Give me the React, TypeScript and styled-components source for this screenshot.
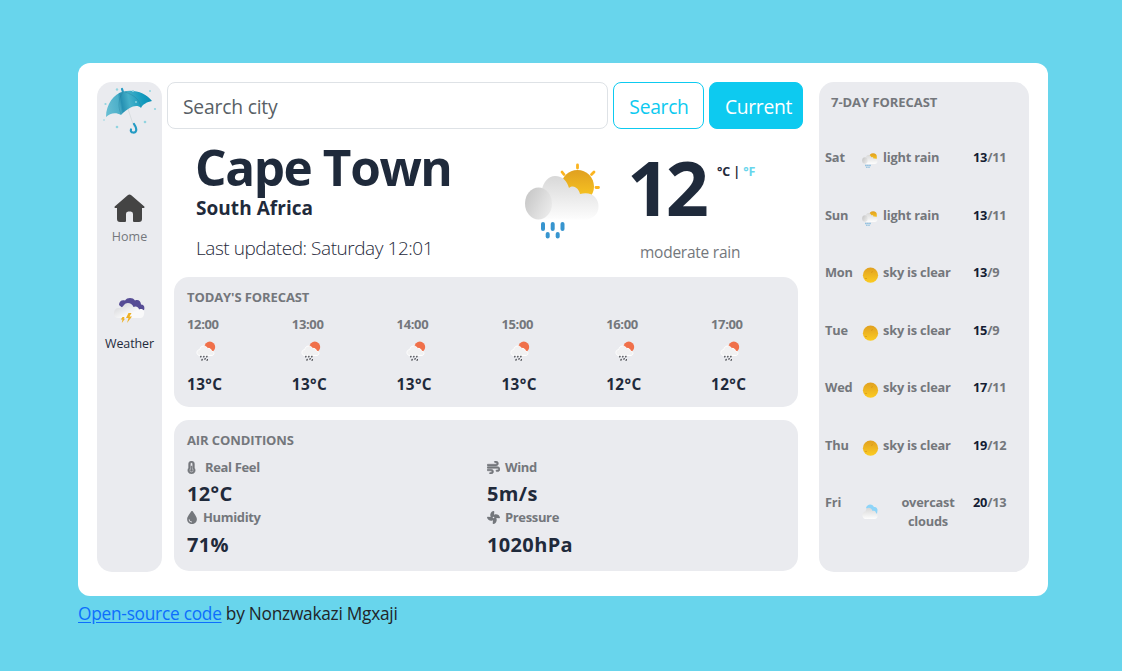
import React from "react";
import styled, { createGlobalStyle } from "styled-components";
import { FaWind, FaDroplet, FaFan, FaTemperatureHalf } from "react-icons/fa6";

const navy = "#1f2a3b";
const grey = "#74777c";
const panel = "#eaebef";
const sky = "#68d5ec";
const info = "#0dcaf0";

const GlobalStyle = createGlobalStyle`
  * { box-sizing: border-box; }
  body {
    margin: 0;
    background: ${sky};
    font-family: "Open Sans", "Noto Sans", sans-serif;
    color: ${navy};
  }
  svg { display: block; }
`;

const Page = styled.div`
  padding: 63px 74px 0 78px;
  height: 671px;
  overflow: hidden;
`;

const Card = styled.main`
  display: flex;
  height: 533px;
  padding: 19px;
  background: #fff;
  border-radius: 12px;
`;

const Sidebar = styled.nav`
  width: 65px;
  height: 490px;
  padding-top: 5px;
  background: ${panel};
  border-radius: 15px;
  display: flex;
  flex-direction: column;
  align-items: center;
`;

const NavItem = styled.div<{ $gap: number; $active?: boolean; $spacing: number }>`
  margin-top: ${(p) => p.$gap}px;
  display: flex;
  flex-direction: column;
  align-items: center;
  font-size: 12.5px;
  line-height: 18px;
  white-space: nowrap;
  letter-spacing: ${(p) => p.$spacing}px;
  color: ${(p) => (p.$active ? navy : grey)};
`;

const NavIcon = styled.div<{ $h: number }>`
  height: ${(p) => p.$h}px;
`;

const Main = styled.section`
  width: 636px;
  margin-left: 5px;
`;

const SearchBar = styled.form`
  display: flex;
  gap: 5px;
  height: 47px;
`;

const SearchInput = styled.input`
  width: 441px;
  padding: 2px 15px 0 15px;
  border: 1px solid #dee2e6;
  border-radius: 8px;
  font: 19.3px "Open Sans", sans-serif;
  letter-spacing: -0.2px;
  color: ${navy};
  &::placeholder { color: #595f66; opacity: 1; }
`;

const Button = styled.button<{ $solid?: boolean }>`
  width: ${(p) => (p.$solid ? 94 : 91)}px;
  padding: ${(p) => (p.$solid ? "2px 0 0 5px" : "2px 0 0 1px")};
  border: 1px solid ${info};
  border-radius: 8px;
  background: ${(p) => (p.$solid ? info : "#fff")};
  color: ${(p) => (p.$solid ? "#fff" : info)};
  font: 19.3px "Open Sans", sans-serif;
  letter-spacing: -0.3px;
`;

const Overview = styled.header`
  display: flex;
  height: 148px;
  padding-left: 29px;
`;

const Place = styled.div`
  width: 328px;
  padding-top: 13px;
  white-space: nowrap;
`;

const City = styled.h1`
  margin: 0 0 0 -1px;
  font-size: 49.5px;
  line-height: 50px;
  letter-spacing: -1.4px;
`;

const Country = styled.h2`
  margin: 4px 0 0;
  font-size: 19px;
  line-height: 25px;
  letter-spacing: 0.05px;
`;

const Updated = styled.p`
  margin: 15px 0 0;
  font-size: 19px;
  font-weight: 300;
  line-height: 25px;
  letter-spacing: -0.45px;
`;

const HeroIcon = styled.div`
  width: 77px;
  padding-top: 33px;
`;

const Current = styled.div`
  margin-left: 26px;
  padding-top: 20px;
  white-space: nowrap;
`;

const Temperature = styled.div`
  display: flex;
  height: 76px;
  font-weight: 700;
`;

const Degrees = styled.span`
  width: 90px;
  font-size: 75.5px;
  line-height: 76px;
  letter-spacing: -4.5px;
`;

const Units = styled.span`
  padding-top: 13px;
  font-size: 12.5px;
  line-height: 20px;
  letter-spacing: -0.1px;
`;

const Fahrenheit = styled.span`
  color: ${sky};
`;

const Condition = styled.p`
  margin: 15px 0 0 13px;
  font-size: 15.5px;
  line-height: 25px;
  letter-spacing: -0.25px;
  color: ${grey};
`;

const Panel = styled.section<{ $h: number }>`
  width: 624px;
  height: ${(p) => p.$h}px;
  margin: 0 0 13px 7px;
  padding: 10px 0 0 13px;
  background: ${panel};
  border-radius: 15px;
  white-space: nowrap;
`;

const Title = styled.h3`
  margin: 0;
  font-size: 13px;
  line-height: 20px;
  letter-spacing: -0.1px;
  color: ${grey};
`;

const Hours = styled.div`
  display: grid;
  grid-template-columns: repeat(6, 104.8px);
  margin-top: 7px;
`;

const Hour = styled.div`
  font-size: 13px;
  font-weight: 700;
  line-height: 20px;
  letter-spacing: -0.35px;
  color: ${grey};
`;

const HourIcon = styled.div`
  height: 40px;
  padding: 7px 0 0 9px;
`;

const HourTemp = styled.div`
  font-size: 15.3px;
  letter-spacing: 0.4px;
  color: ${navy};
`;

const Metrics = styled.div`
  display: grid;
  grid-template-columns: 300px 1fr;
  margin-top: 7px;
`;

const Metric = styled.div`
  height: 50.4px;
`;

const MetricLabel = styled.div<{ $gap: number }>`
  display: flex;
  align-items: center;
  gap: ${(p) => p.$gap}px;
  font-size: 13px;
  font-weight: 700;
  line-height: 20px;
  letter-spacing: -0.35px;
  color: ${grey};
`;

const MetricValue = styled.div`
  margin-top: 5.2px;
  font-size: 20px;
  font-weight: 700;
  line-height: 24px;
  letter-spacing: 0.35px;
`;

const Week = styled.aside`
  width: 210px;
  height: 490px;
  margin-left: 16px;
  padding: 10px 0 0 6px;
  background: ${panel};
  border-radius: 15px;
  white-space: nowrap;
`;

const WeekTitle = styled(Title)`
  padding-left: 6px;
  margin-bottom: 36px;
  letter-spacing: -0.05px;
`;

const Day = styled.div`
  display: grid;
  grid-template-columns: 37px 21px 90px 1fr;
  height: 57.5px;
  font-size: 12.8px;
  font-weight: 700;
  line-height: 19px;
  letter-spacing: -0.2px;
  color: ${grey};
`;

const DayIcon = styled.div`
  padding-top: 4px;
`;

const Summary = styled.span<{ $wrap?: boolean }>`
  white-space: pre;
  ${(p) => p.$wrap && "text-align: center;"}
`;

const Range = styled.span`
  letter-spacing: -0.25px;
  b { font-weight: 700; color: #141c33; }
`;

const Credit = styled.footer`
  margin-top: 4px;
  font-size: 17.3px;
  line-height: 27px;
  letter-spacing: -0.25px;
  color: #212529;
  a { color: #0d6efd; text-decoration: underline; text-underline-offset: 2px; }
`;

const Umbrella = () => (
  <svg width="54" height="48" viewBox="0 0 54 48">
    <defs>
      <linearGradient id="umb" x1="0" y1="0.4" x2="1" y2="0.3">
        <stop offset="0" stopColor="#65bdd2" />
        <stop offset="0.27" stopColor="#4cafc9" />
        <stop offset="0.33" stopColor="#2690b2" />
        <stop offset="0.5" stopColor="#45b0c9" />
        <stop offset="0.8" stopColor="#139abd" />
        <stop offset="1" stopColor="#078db5" />
      </linearGradient>
    </defs>
    <path d="M25 22 L31 40" stroke="#d9dde0" strokeWidth="1" />
    <path d="M20 5 L19 2 M31 37 C35 43 33 46 30 45.5 C28 45.5 27.5 44 28 42.5" stroke="#249bc4" strokeWidth="2.2" fill="none" strokeLinecap="round" />
    <path d="M3 30 C3 17 11 7 20 4.5 C32 2 43 6 49 14 C44 15 40 17 38 21 C34 17 27 19 18 28 C13 25 7 26 3 30 Z" fill="url(#umb)" />
    <path d="M20 5 C15 12 15 20 18 27 M22 5 C32 8 37 14 38 20" stroke="#28809c" strokeWidth=".7" fill="none" opacity=".6" />
    <g fill="#91d4e0">
      <circle cx="14" cy="2.5" r="1.2" /><circle cx="30" cy="4" r="1.1" /><circle cx="47" cy="4" r="1" />
      <circle cx="2.5" cy="17" r="1.1" /><circle cx="52" cy="22" r="1.1" /><circle cx="14" cy="40" r="1.3" />
      <circle cx="42" cy="35" r="1.3" /><circle cx="1" cy="33" r=".8" /><circle cx="33" cy="15" r=".9" />
    </g>
  </svg>
);

const House = () => (
  <svg width="31" height="29" viewBox="0 0 31 29">
    <path
      d="M13.7 1.3 Q15.5 -.3 17.3 1.3 L30.3 12.5 Q31 13.7 29.7 14 H28 V25 Q28 28 25 28 H20 Q19 28 19 27 V20 Q19 17.5 16.8 17.5 H14.2 Q12 17.5 12 20 V27 Q12 28 11 28 H6 Q3 28 3 25 V14 H1.3 Q0 13.7 .7 12.5 Z"
      fill="#444"
    />
  </svg>
);

const Storm = () => (
  <svg width="31" height="25" viewBox="0 0 31 25">
    <defs>
      <linearGradient id="stormCloud" x1="0" y1="0" x2="1" y2="1">
        <stop offset="0" stopColor="#d0d1d4" />
        <stop offset="0.65" stopColor="#f9f9fa" />
      </linearGradient>
    </defs>
    <path d="M5 7 C5 3 8 1.5 11 2.5 C13-.8 19-.8 21 2.5 C24 1 27 3 27 6.5 C30 6.5 31 9 30 12 L24 14 L11 12 Z" fill="#564c95" />
    <path d="M4.5 10 C8 10 9 8 10 7 C12 3.5 18 4.5 19.5 9 C22 7.5 25 9.5 25 11.5 C29 10 31 13 30 16 C29.5 19.5 28 20 26 20 H5 C1 20 0 18 0 15 C0 12 2 10 4.5 10 Z" fill="url(#stormCloud)" />
    <path d="M8.5 19 L6.8 21.5 H8.5 L7.8 25 L11 20.8 H9.7 L10.5 19 Z M14.5 15 L12 20 H14.5 L13 25 L18 18.5 H15.5 L17.5 15 Z" fill="#eeb023" />
  </svg>
);

const SunRain = ({ size, rays }: { size: number; rays?: boolean }) => (
  <svg width={size} height={size} viewBox="0 0 77 77">
    <defs>
      <linearGradient id="sunFill" x1="0" y1="0" x2="0" y2="1">
        <stop offset="0" stopColor="#e0a020" />
        <stop offset="1" stopColor="#fccc22" />
      </linearGradient>
      <linearGradient id="cloudBody" x1="0" y1="0" x2="0" y2="1">
        <stop offset="0" stopColor="#d8d8d8" />
        <stop offset="1" stopColor="#fdfdfd" />
      </linearGradient>
      <linearGradient id="cloudPuff" x1="0" y1="0.2" x2="1" y2="0.8">
        <stop offset="0" stopColor="#c6c6c6" />
        <stop offset="1" stopColor="#ededed" />
      </linearGradient>
    </defs>
    {rays && (
      <path d="M53.5 3 V6 M38 10 L40 12.5 M70 10 L67.5 12.5 M72 25.5 H74.5" stroke="#fbb41f" strokeWidth="2.8" strokeLinecap="round" />
    )}
    <circle cx="53.5" cy="24.5" r={rays ? 16.5 : 18} fill="url(#sunFill)" />
    <path d="M14 57.5 C3 55 5 27 18 28 C19 20 25 14 31 14 C39 14 43 19 45 26 C50 22 55 27 56 32 C68 29 74.5 36 74.5 44.5 C74.5 52 69 57.5 61 57.5 Z" fill="url(#cloudBody)" />
    <ellipse cx="14.5" cy="41.5" rx="13.5" ry="16" fill="url(#cloudPuff)" />
    <g fill="#3795cf">
      <rect x="17" y="60" width="4" height="9" rx="2" />
      <rect x="26.7" y="60" width="4" height="9" rx="2" />
      <rect x="36.5" y="60" width="4" height="9" rx="2" />
      <rect x="21.7" y="70" width="4" height="6.5" rx="2" />
      <rect x="31.7" y="70" width="4" height="6.5" rx="2" />
    </g>
  </svg>
);

const Shower = () => (
  <svg width="20" height="21" viewBox="0 0 20 21">
    <circle cx="13.8" cy="6" r="5.4" fill="#f0704a" />
    <path d="M3 14.4 C0 13.5 .2 8.8 3.8 8.6 C4.2 4.5 9.6 3.6 11.5 7.4 C14 7 15.4 8.5 15.3 10 C19 10.3 18.5 14.4 16 14.4 Z" fill="#f1f1f2" stroke="#fff" strokeWidth="1" />
    <path d="M5 15.2 L4.7 16 M8 15.2 L7.7 16 M11 15.2 L10.7 16 M6.2 18.3 L5.9 19.2 M9.2 17.6 L8.9 18.3 M11.4 18.6 L11.1 19.4" stroke="#3b3d42" strokeWidth="1.2" strokeLinecap="round" />
  </svg>
);

const Sun = () => (
  <svg width="17" height="17" viewBox="0 0 17 17">
    <circle cx="8.5" cy="8.2" r="7.6" fill="url(#sunFill)" />
    <path d="M3 11.5 H5 M9 5.5 L11 4.5" stroke="#d28f13" strokeWidth=".6" />
  </svg>
);

const Overcast = () => (
  <svg width="16" height="24" viewBox="0 -5 16 24">
    <path d="M4 6 C5 2 10 1 12 5 C14 4.5 15.5 6 15.5 8 L15 12 L9 10 Z" fill="#8dd4f8" />
    <path d="M3 17 C-.8 16 -.2 9.5 3.5 9.5 C4 5 9 4.5 10.5 9 C13 8.2 14 10 14 11.3 C16.5 12 16 17 13 17 Z" fill="url(#cloudBody)" />
  </svg>
);

const hours = [
  ["12:00", 13], ["13:00", 13], ["14:00", 13], ["15:00", 13], ["16:00", 12], ["17:00", 12],
] as const;

const bold = { stroke: "currentColor", strokeWidth: 22 };

const metrics = [
  { label: "Real Feel", value: "12°C", gap: 9, icon: <FaTemperatureHalf size={13} width={9} {...bold} /> },
  { label: "Wind", value: "5m/s", gap: 5, icon: <FaWind size={13} {...bold} /> },
  { label: "Humidity", value: "71%", gap: 6, icon: <FaDroplet size={13} width={10} /> },
  { label: "Pressure", value: "1020hPa", gap: 5, icon: <FaFan size={13} /> },
];

const MetricIcon = styled.span<{ $w: number }>`
  display: flex;
  justify-content: center;
  width: ${(p) => p.$w}px;
`;

const iconWidths: Record<string, number> = { "Real Feel": 9, Humidity: 10 };

const days = [
  { day: "Sat", text: "light rain", high: 13, low: 11 },
  { day: "Sun", text: "light rain", high: 13, low: 11 },
  { day: "Mon", text: "sky is clear", high: 13, low: 9 },
  { day: "Tue", text: "sky is clear", high: 15, low: 9 },
  { day: "Wed", text: "sky is clear", high: 17, low: 11 },
  { day: "Thu", text: "sky is clear", high: 19, low: 12 },
  { day: "Fri", text: "overcast\nclouds", high: 20, low: 13 },
];

const dayIcon = (text: string) => {
  if (text === "light rain") return <SunRain size={16} />;
  return text === "sky is clear" ? <Sun /> : <Overcast />;
};

export default function App() {
  return (
    <>
      <GlobalStyle />
      <Page>
        <Card>
          <Sidebar>
            <Umbrella />
            <NavItem $gap={59} $spacing={0}>
              <NavIcon $h={34}><House /></NavIcon>
              Home
            </NavItem>
            <NavItem $gap={52} $active $spacing={-0.1}>
              <NavIcon $h={37}><Storm /></NavIcon>
              Weather
            </NavItem>
          </Sidebar>

          <Main>
            <SearchBar>
              <SearchInput placeholder="Search city" />
              <Button type="button">Search</Button>
              <Button type="button" $solid>Current</Button>
            </SearchBar>

            <Overview>
              <Place>
                <City>Cape Town</City>
                <Country>South Africa</Country>
                <Updated>Last updated: Saturday 12:01</Updated>
              </Place>
              <HeroIcon><SunRain size={77} rays /></HeroIcon>
              <Current>
                <Temperature>
                  <Degrees>12</Degrees>
                  <Units>°C | <Fahrenheit>°F</Fahrenheit></Units>
                </Temperature>
                <Condition>moderate rain</Condition>
              </Current>
            </Overview>

            <Panel $h={130}>
              <Title>TODAY'S FORECAST</Title>
              <Hours>
                {hours.map(([time, temp]) => (
                  <Hour key={time}>
                    {time}
                    <HourIcon><Shower /></HourIcon>
                    <HourTemp>{temp}°C</HourTemp>
                  </Hour>
                ))}
              </Hours>
            </Panel>

            <Panel $h={151}>
              <Title>AIR CONDITIONS</Title>
              <Metrics>
                {metrics.map((m) => (
                  <Metric key={m.label}>
                    <MetricLabel $gap={m.gap}>
                      <MetricIcon $w={iconWidths[m.label] ?? 13}>{m.icon}</MetricIcon>
                      {m.label}
                    </MetricLabel>
                    <MetricValue>{m.value}</MetricValue>
                  </Metric>
                ))}
              </Metrics>
            </Panel>
          </Main>

          <Week>
            <WeekTitle>7-DAY FORECAST</WeekTitle>
            {days.map((d) => (
              <Day key={d.day}>
                <span>{d.day}</span>
                <DayIcon>{dayIcon(d.text)}</DayIcon>
                <Summary $wrap={d.text.includes("\n")}>{d.text}</Summary>
                <Range><b>{d.high}</b>/{d.low}</Range>
              </Day>
            ))}
          </Week>
        </Card>
        <Credit><a href="#source">Open-source code</a> by Nonzwakazi Mgxaji</Credit>
      </Page>
    </>
  );
}
